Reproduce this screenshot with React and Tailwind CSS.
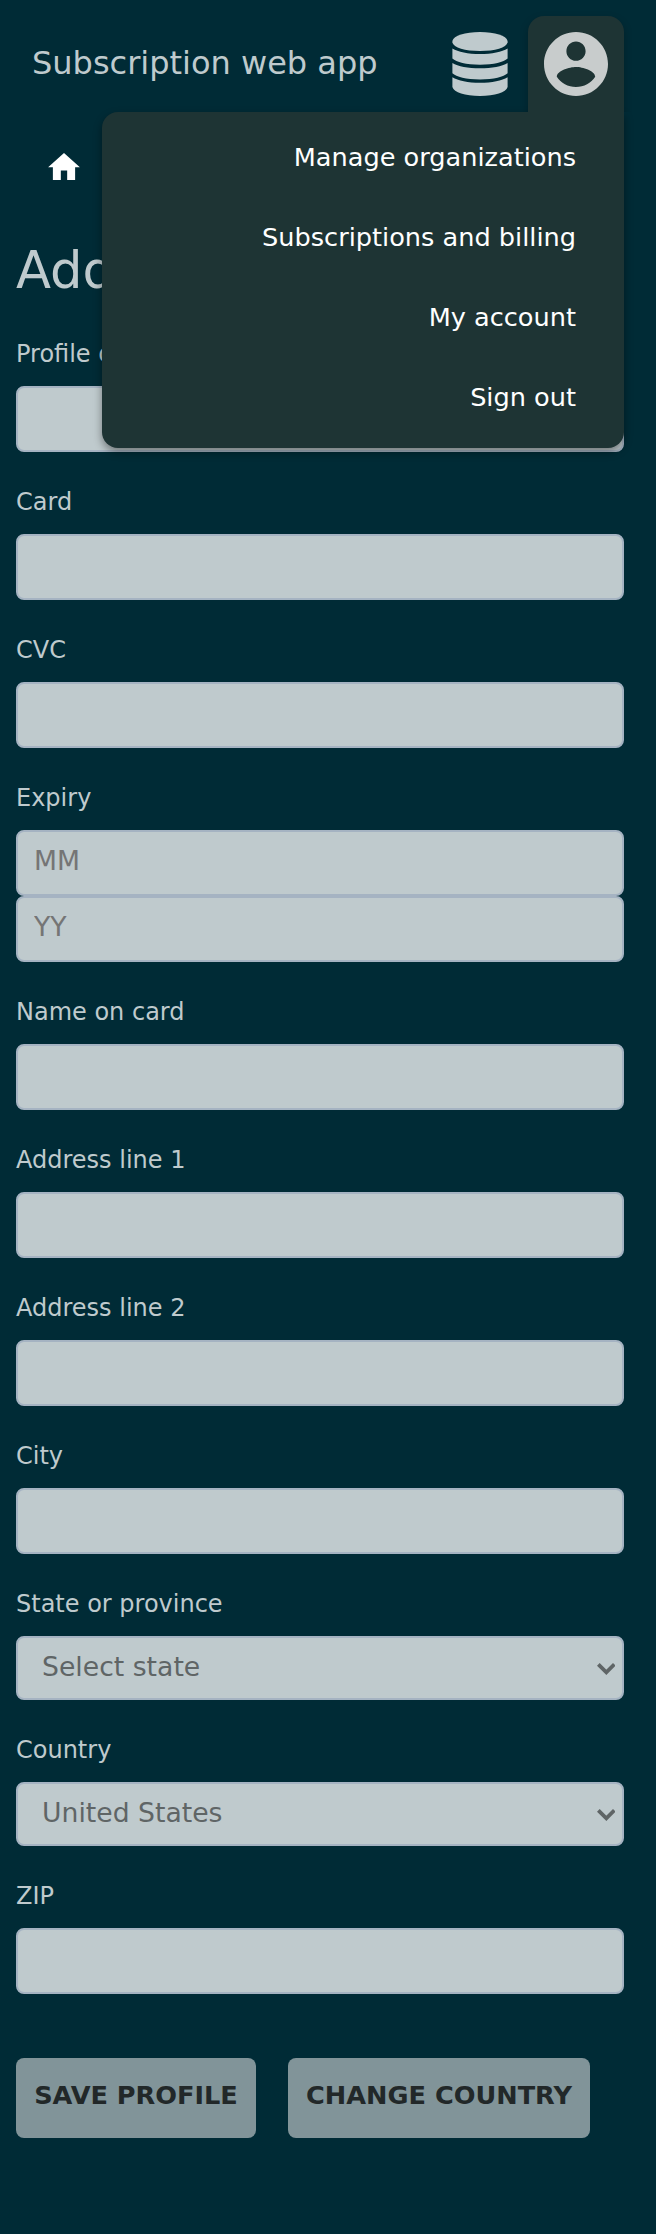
const rootFont = "font-['DejaVu_Sans',sans-serif]";

const inputClass =
  "block w-full h-[66px] rounded-lg border-2 border-[#a5b3c2] bg-[#bfcacd] px-4 pb-[5px] text-[26.667px] text-[#222829] placeholder:text-[#757575] outline-none";

function Field({ label, children }) {
  return (
    <div>
      <label className="flex h-[82px] items-start pt-[36px] text-[24px] leading-[28px] text-[#bfcacd]">
        {label}
      </label>
      {children}
    </div>
  );
}

function TextField({ label }) {
  return (
    <Field label={label}>
      <input className={inputClass} />
    </Field>
  );
}

function SelectField({ label, value }) {
  return (
    <Field label={label}>
      <div className="flex h-16 items-center justify-between rounded-lg border-2 border-[#a5b3c2] bg-[#bfcacd] pr-[6.7px] pl-6 text-[26.667px] text-[#5f6566]">
        <span className="pb-[2px] leading-8">{value}</span>
        <svg className="mt-px h-[12px] w-[18.7px]" viewBox="0 0 18.7 12" fill="none" stroke="currentColor" strokeWidth="3.8">
          <path d="M1.350 1.350 9.350 9.300 17.350 1.350" />
        </svg>
      </div>
    </Field>
  );
}

function DatabaseIcon() {
  return (
    <svg className="h-16 w-14" viewBox="0 0 56 64" fill="currentColor">
      <path d="M.4 9C1.500 3.500 13 0 28 0s26.500 3.500 27.600 9v1.500C54.500 15.500 43 19 28 19S1.500 15.500.4 10.500z" />
      <path d="M.4 16.500C6 20 16 22 28 22s22-2 27.600-5.500v10C51.600 30 42 32.700 28 32.700S4.400 30 .4 26.500z" />
      <path d="M.4 31C6 34.500 16 36.300 28 36.300S50 34.500 55.600 31v10.300C51.600 45 42 47.500 28 47.500S4.400 45 .4 41.300z" />
      <path d="M.4 45.300C6 48.800 16 50.800 28 50.800s22-2 27.600-5.500V55c-1.600 5.500-12.600 9-27.600 9S2 60.500.4 55z" />
    </svg>
  );
}

function AccountIcon() {
  return (
    <svg className="size-16" viewBox="2 2 20 20" fill="currentColor">
      <path d="M12 2C6.480 2 2 6.480 2 12s4.480 10 10 10 10-4.480 10-10S17.520 2 12 2zm0 3c1.660 0 3 1.340 3 3s-1.340 3-3 3-3-1.340-3-3 1.340-3 3-3zm0 14.200c-2.500 0-4.710-1.280-6-3.220.03-1.990 4-3.080 6-3.080 1.990 0 5.970 1.090 6 3.080-1.290 1.940-3.500 3.220-6 3.220z" />
    </svg>
  );
}

const menuItems = ["Manage organizations", "Subscriptions and billing", "My account", "Sign out"];

export default function App() {
  return (
    <div className={`${rootFont} min-h-[2234px] bg-[#002b36] px-4`}>
      <div className="w-[608px]">
        <header className="relative flex h-28 items-start pt-4 pl-4 text-[#bfcacd]">
          <span className="flex-1 pt-[28px] text-[32px] leading-[38px]">Subscription web app</span>
          <button className="mr-5 pt-4">
            <DatabaseIcon />
          </button>
          <button className="relative z-20 flex h-24 w-24 items-start justify-center rounded-t-2xl bg-[#1e3434] pt-4 text-[#c8cccc] shadow-[0_4px_8px_rgba(0,0,0,0.25)] [clip-path:inset(-8px_-8px_0_-8px)]">
            <AccountIcon />
          </button>
          <nav className="absolute top-28 right-0 z-10 flex h-[336px] w-[522px] flex-col rounded-2xl rounded-tr-none bg-[#1e3434] pt-[5px] pr-12 text-right text-[25.6px] text-white shadow-[0_4px_8px_rgba(0,0,0,0.4)]">
            {menuItems.map((item) => (
              <a key={item} className="flex h-20 items-center justify-end">
                {item}
              </a>
            ))}
          </nav>
        </header>
        <div className="h-[116px] pt-[41px] pl-8 text-white">
          <svg className="h-[27px] w-8" viewBox="2 3 20 17" fill="currentColor">
            <path d="M10 20v-6h4v6h5v-8h3L12 3 2 12h3v8z" />
          </svg>
        </div>
        <h1 className="h-[76px] pt-[12px] text-[51.2px] leading-[60px] text-[#bfcacd]">Add profile</h1>
        <form>
          <TextField label="Profile description" />
          <TextField label="Card" />
          <TextField label="CVC" />
          <Field label="Expiry">
            <input className={inputClass} placeholder="MM" />
            <input className={inputClass} placeholder="YY" />
          </Field>
          <TextField label="Name on card" />
          <TextField label="Address line 1" />
          <TextField label="Address line 2" />
          <TextField label="City" />
          <SelectField label="State or province" value="Select state" />
          <SelectField label="Country" value="United States" />
          <TextField label="ZIP" />
          <div className="flex gap-8 pt-16 text-[25.6px] font-bold text-[#222829]">
            <button type="button" className="h-20 w-60 rounded-lg bg-[#819499] pb-[6px] whitespace-nowrap">
              SAVE PROFILE
            </button>
            <button type="button" className="h-20 w-[302px] rounded-lg bg-[#819499] pb-[6px] whitespace-nowrap">
              CHANGE COUNTRY
            </button>
          </div>
        </form>
      </div>
    </div>
  );
}
